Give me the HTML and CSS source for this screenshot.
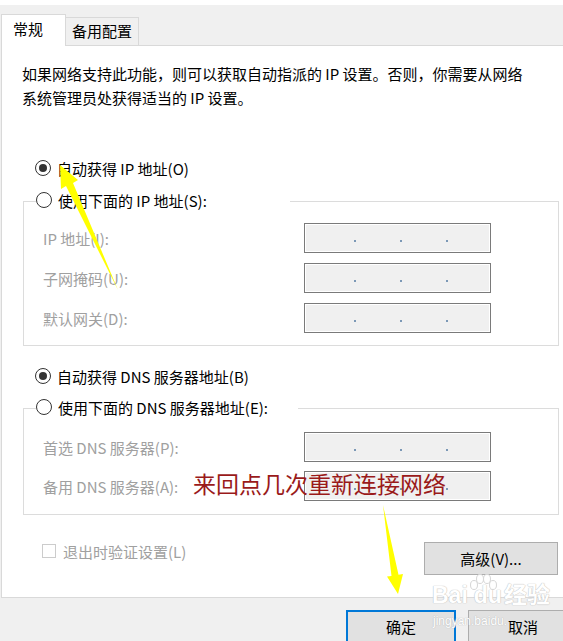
FILE: index.html
```html
<!DOCTYPE html>
<html lang="zh-CN">
<head>
  <meta charset="UTF-8" />
  <meta name="viewport" content="width=device-width, initial-scale=1.0"/>
  <title>Internet 协议版本 4 (TCP/IPv4) 属性</title>
  <link rel="stylesheet" href="styles.css">
</head>
<body>

  <div class="window">
    <div class="topline"></div>

    <div class="tabs">
      <div class="tab active">常规</div>
      <div class="tab">备用配置</div>
    </div>

    <div class="panel">
      <p class="intro">如果网络支持此功能，则可以获取自动指派的 IP 设置。否则，你需要从网络<br>系统管理员处获得适当的 IP 设置。</p>

      <div class="radio-row r-auto-ip"><span class="radio on"></span>自动获得 IP 地址(O)</div>

      <fieldset class="group g-ip">
        <legend><span class="legend-row"><span class="radio"></span>使用下面的 IP 地址(S):</span></legend>
        <div class="field"><span class="label">IP 地址(I):</span><div class="ip"><i></i><i></i><i></i></div></div>
        <div class="field"><span class="label">子网掩码(U):</span><div class="ip"><i></i><i></i><i></i></div></div>
        <div class="field"><span class="label">默认网关(D):</span><div class="ip"><i></i><i></i><i></i></div></div>
      </fieldset>

      <div class="radio-row r-auto-dns"><span class="radio on"></span>自动获得 DNS 服务器地址(B)</div>

      <fieldset class="group g-dns">
        <legend><span class="legend-row"><span class="radio"></span>使用下面的 DNS 服务器地址(E):</span></legend>
        <div class="field"><span class="label">首选 DNS 服务器(P):</span><div class="ip"><i></i><i></i><i></i></div></div>
        <div class="field"><span class="label">备用 DNS 服务器(A):</span><div class="ip"><i></i><i></i><i></i></div></div>
      </fieldset>

      <div class="bottom-row">
        <label class="check"><span class="box"></span>退出时验证设置(L)</label>
        <button class="btn advanced">高级(V)...</button>
      </div>
    </div>

    <div class="footer">
      <button class="btn ok">确定</button>
      <button class="btn">取消</button>
    </div>

    <!-- annotations added on top of the screenshot -->
    <div class="note">来回点几次重新连接网络</div>

    <svg class="arrows" width="563" height="641" viewBox="0 0 563 641">
      <polygon points="60,165 78,180 73,183 118,290 66,186 61,189" fill="#ffff00"/>
      <polygon points="383,505 398.5,574.7 403,574 398,594 387,576.6 391.5,575.9" fill="#ffff00"/>
    </svg>

    <div class="watermark">
      <svg class="paw" width="30" height="26" viewBox="0 0 30 26">
        <g fill="#fff" stroke="#d6d6d6" stroke-width="1">
          <ellipse cx="6" cy="11" rx="3.5" ry="4.5"/>
          <ellipse cx="12" cy="5" rx="3.5" ry="4.5"/>
          <ellipse cx="19" cy="5" rx="3.5" ry="4.5"/>
          <ellipse cx="25" cy="11" rx="3.5" ry="4.5"/>
        </g>
      </svg>
      <div class="wm-main">Bai<span class="du">du</span>经验</div>
      <div class="wm-sub">jingyan.baidu.</div>
    </div>
  </div>

</body>
</html>
```

FILE: styles.css
```css
body {
  margin: 0;
  background: #f0f0f0;
  font-family: "Noto Sans CJK SC", "Microsoft YaHei", sans-serif;
  font-size: 15px;
  color: #000;
  overflow: hidden;
}

.window {
  position: relative;
  width: 563px;
  height: 641px;
  overflow: hidden;
}

.topline {
  height: 5px;
  background: #fff;
}

.tabs {
  display: flex;
  align-items: flex-end;
  height: 41px;
  margin-left: 1px;
  margin-bottom: -1px;
  position: relative;
  z-index: 1;
}

.tab {
  height: 27px;
  line-height: 26px;
  padding: 0 6px;
  border: 1px solid #d9d9d9;
  border-bottom: none;
  background: #f0f0f0;
  margin-bottom: 1px;
  margin-left: -1px;
}

.tab.active {
  height: 31px;
  line-height: 28px;
  width: 52px;
  padding: 0 0 0 11px;
  background: #fff;
  margin-left: 0;
  margin-bottom: 0;
}

.tab.active + .tab {
  margin-left: 0;
  border-left: none;
}

.panel {
  box-sizing: border-box;
  width: 600px;
  height: 553px;
  margin-left: 1px;
  background: #fff;
  border: 1px solid #d9d9d9;
  padding-top: 16px;
}

.intro {
  margin: 0 0 0 20px;
  line-height: 24px;
  width: 540px;
}

.radio-row {
  display: flex;
  align-items: center;
  height: 24px;
  margin-left: 33px;
}

.r-auto-ip { margin-top: 46px; }
.r-auto-dns { margin-top: 18px; }

.radio {
  box-sizing: border-box;
  width: 16px;
  height: 16px;
  border: 1px solid #333;
  border-radius: 50%;
  margin-right: 6px;
  display: flex;
  align-items: center;
  justify-content: center;
  background: #fff;
  flex: none;
}

.radio.on::after {
  content: "";
  width: 8px;
  height: 8px;
  border-radius: 50%;
  background: #333;
}

.group {
  box-sizing: border-box;
  width: 536px;
  margin: 0 0 0 21px;
  padding: 0 0 12px 12px;
  border: 1px solid #dcdcdc;
  min-inline-size: 0;
}

.g-ip { margin-top: 9px; }
.g-dns { margin-top: 8px; padding-bottom: 13px; }

.group legend {
  padding: 0;
  height: 24px;
}

.g-ip legend { width: 254px; }
.g-dns legend { width: 262px; }

.legend-row {
  display: flex;
  align-items: center;
  height: 22px;
}

.field {
  display: flex;
  align-items: center;
  height: 30px;
  margin-top: 10px;
  padding-left: 7px;
}

.field:first-of-type { margin-top: 10px; }
.g-dns .field:first-of-type { margin-top: 12px; }
.g-dns .field + .field { margin-top: 9px; }

.label {
  width: 261px;
  color: #a0a0a0;
}

.ip {
  box-sizing: border-box;
  width: 187px;
  height: 30px;
  border: 1px solid #7a7a7a;
  box-shadow: inset 0 0 0 1px #fff;
  background: #f0f0f0;
  display: flex;
  align-items: center;
  gap: 44px;
  padding: 6px 0 0 49px;
}

.ip i {
  width: 2px;
  height: 2px;
  background: #7b98b6;
}

.bottom-row {
  display: flex;
  justify-content: space-between;
  align-items: flex-start;
  width: 536px;
  margin: 25px 0 0 21px;
}

.check {
  display: flex;
  align-items: center;
  height: 22px;
  margin-left: 19px;
  color: #a0a0a0;
}

.check .box {
  box-sizing: border-box;
  width: 14px;
  height: 14px;
  border: 1px solid #cccccc;
  margin-right: 7px;
}

.btn {
  font-family: inherit;
  font-size: 15px;
  color: #000;
  background: #e1e1e1;
  border: 1px solid #adadad;
  padding: 0;
  box-sizing: border-box;
}

.advanced {
  width: 134px;
  height: 33px;
  margin-top: 2px;
  margin-right: 1px;
}

.footer {
  display: flex;
  gap: 12px;
  padding: 12px 0 0 346px;
}

.footer .btn {
  width: 110px;
  height: 36px;
  flex: none;
  padding-bottom: 4px;
}

.footer .ok {
  border: 2px solid #0078d7;
}

.note {
  position: absolute;
  left: 193px;
  top: 470px;
  font-size: 23px;
  line-height: 26px;
  color: #9a1a1a;
}

.arrows {
  position: absolute;
  left: 0;
  top: 0;
  pointer-events: none;
}

.watermark {
  position: absolute;
  left: 432px;
  top: 574px;
  width: 130px;
  height: 60px;
  color: #fff;
  font-family: "Liberation Sans", "Noto Sans CJK SC", sans-serif;
  text-shadow: 0 0 1px #bdbdbd, 0 0 1px #bdbdbd;
}

.paw {
  position: absolute;
  left: 36px;
  top: 0;
}

.wm-main {
  position: absolute;
  left: 0;
  top: 8px;
  font-size: 23px;
  font-weight: bold;
  line-height: 26px;
  white-space: nowrap;
}

.wm-main .du {
  margin: 0 2px 0 6px;
}

.wm-sub {
  position: absolute;
  left: 1px;
  top: 39px;
  font-size: 12px;
  line-height: 16px;
  white-space: nowrap;
}
```
